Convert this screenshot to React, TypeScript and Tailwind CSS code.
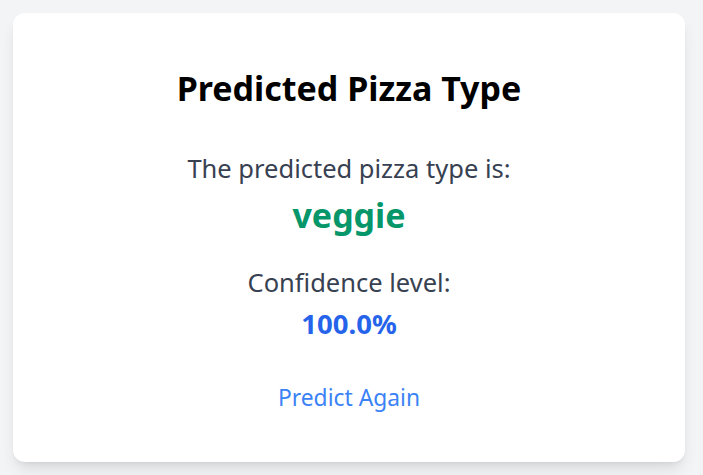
export default function App() {
  return (
    <div className="min-h-screen bg-[#f3f4f6] p-[13px] font-['Noto_Sans',sans-serif]">
      <div className="w-[672px] h-[449px] rounded-xl bg-white shadow-lg flex flex-col items-center pt-[55px]">
        <h2 className="text-[34px] leading-[40px] font-bold text-black">Predicted Pizza Type</h2>
        <p className="mt-[44px] text-[25.5px] leading-[32px] text-[#374151]">The predicted pizza type is:</p>
        <p className="mt-[11px] text-[34px] leading-[40px] font-bold text-[#059669]">veggie</p>
        <p className="mt-[31px] text-[25.5px] leading-[32px] text-[#374151]">Confidence level:</p>
        <p className="mt-[9px] text-[27.5px] leading-[34px] font-bold text-[#2563eb]">100.0%</p>
        <button className="mt-[42px] text-[22.8px] leading-[30px] text-[#3b82f6]">Predict Again</button>
      </div>
    </div>
  );
}
